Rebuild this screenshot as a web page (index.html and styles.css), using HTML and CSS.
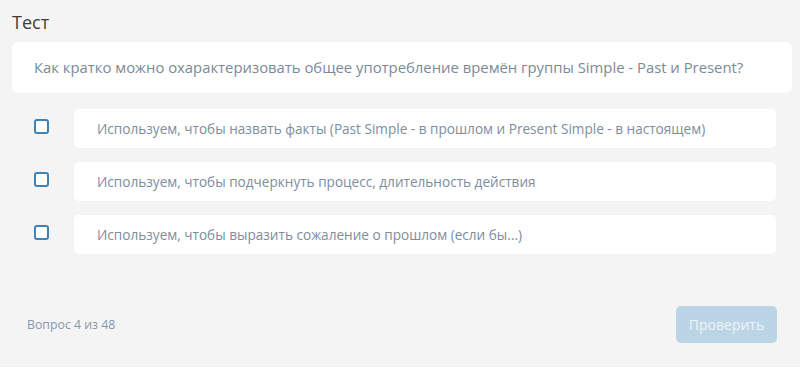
FILE: index.html
```html
<!DOCTYPE html>
<html lang="ru">
<head>
<meta charset="utf-8">
<link rel="stylesheet" href="styles.css">
</head>
<body>
<div class="page">
  <h1 class="title">Тест</h1>
  <div class="question">Как кратко можно охарактеризовать общее употребление времён группы Simple - Past и Present?</div>
  <div class="answers">
    <label class="answer"><span class="check"></span><span class="answer-card">Используем, чтобы назвать факты (Past Simple - в прошлом и Present Simple - в настоящем)</span></label>
    <label class="answer"><span class="check"></span><span class="answer-card">Используем, чтобы подчеркнуть процесс, длительность действия</span></label>
    <label class="answer"><span class="check"></span><span class="answer-card">Используем, чтобы выразить сожаление о прошлом (если бы...)</span></label>
  </div>
  <div class="footer">
    <span class="counter">Вопрос 4 из 48</span>
    <button class="submit" disabled>Проверить</button>
  </div>
</div>
</body>
</html>
```
FILE: styles.css
```css
* { box-sizing: border-box; }
body {
  margin: 0;
  background: #ffffff;
  font-family: "Open Sans", "Liberation Sans", sans-serif;
}
.page {
  background: #f4f4f4;
  height: 367px;
  padding: 10px 8px 0 12px;
}
.title {
  margin: 0 0 8px;
  font-size: 18px;
  line-height: 24px;
  font-weight: 400;
  color: #3d3d3d;
}
.question {
  background: #ffffff;
  border-radius: 6px;
  padding: 15px 22px;
  font-size: 14.85px;
  line-height: 21px;
  color: #7b8a99;
}
.answers {
  display: flex;
  flex-direction: column;
  gap: 14px;
  padding: 16px 16px 0 22px;
}
.answer {
  display: flex;
  align-items: center;
  gap: 25px;
}
.check {
  flex: none;
  width: 15px;
  height: 15px;
  border: 2px solid #3d83b8;
  border-radius: 3px;
  background: #ffffff;
  margin-top: -4px;
}
.answer-card {
  flex: 1;
  background: #ffffff;
  border-radius: 5px;
  padding: 9px 23px;
  font-size: 13.6px;
  line-height: 21px;
  color: #7e8d9c;
}
.footer {
  display: flex;
  justify-content: space-between;
  align-items: center;
  margin-top: 52px;
  padding: 0 15px;
}
.counter {
  font-size: 12.3px;
  color: #8698ad;
}
.submit {
  width: 101px;
  height: 37px;
  border: none;
  border-radius: 5px;
  background: #bcd5e6;
  color: #eef4f8;
  font-family: inherit;
  font-size: 14px;
}
```
